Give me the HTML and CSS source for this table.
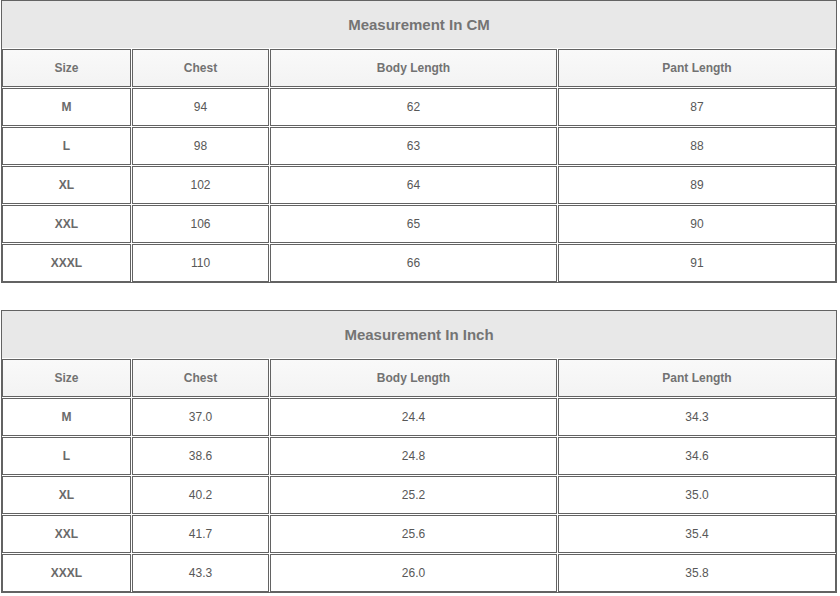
FILE: index.html
```html
<!DOCTYPE html>
<html>
<head>
<meta charset="utf-8">
<link rel="stylesheet" href="styles.css">
</head>
<body>
<div class="sheet">
  <div class="title">Measurement In CM</div>
  <div class="grid">
    <div class="cell head">Size</div><div class="cell head">Chest</div><div class="cell head">Body Length</div><div class="cell head">Pant Length</div>
    <div class="cell size">M</div><div class="cell">94</div><div class="cell">62</div><div class="cell">87</div>
    <div class="cell size">L</div><div class="cell">98</div><div class="cell">63</div><div class="cell">88</div>
    <div class="cell size">XL</div><div class="cell">102</div><div class="cell">64</div><div class="cell">89</div>
    <div class="cell size">XXL</div><div class="cell">106</div><div class="cell">65</div><div class="cell">90</div>
    <div class="cell size">XXXL</div><div class="cell">110</div><div class="cell">66</div><div class="cell">91</div>
  </div>
</div>
<div class="sheet second">
  <div class="title">Measurement In Inch</div>
  <div class="grid">
    <div class="cell head">Size</div><div class="cell head">Chest</div><div class="cell head">Body Length</div><div class="cell head">Pant Length</div>
    <div class="cell size">M</div><div class="cell">37.0</div><div class="cell">24.4</div><div class="cell">34.3</div>
    <div class="cell size">L</div><div class="cell">38.6</div><div class="cell">24.8</div><div class="cell">34.6</div>
    <div class="cell size">XL</div><div class="cell">40.2</div><div class="cell">25.2</div><div class="cell">35.0</div>
    <div class="cell size">XXL</div><div class="cell">41.7</div><div class="cell">25.6</div><div class="cell">35.4</div>
    <div class="cell size">XXXL</div><div class="cell">43.3</div><div class="cell">26.0</div><div class="cell">35.8</div>
  </div>
</div>
</body>
</html>
```

FILE: styles.css
```css
html, body {
  margin: 0;
  padding: 0;
  background: #ffffff;
}
body {
  font-family: "Liberation Sans", Arial, sans-serif;
  padding-left: 1px;
}
.sheet {
  width: 834px;
  border: 1px solid #636363;
  background: #ffffff;
}
.sheet.second {
  margin-top: 27px;
}
.title {
  height: 47px;
  margin-bottom: 1px;
  background: #e8e8e8;
  color: #747474;
  font-weight: bold;
  font-size: 15px;
  line-height: 1;
  padding-bottom: 1px;
  box-sizing: border-box;
  display: flex;
  align-items: center;
  justify-content: center;
}
.grid {
  display: grid;
  grid-template-columns: 129px 137px 287px 278px;
  grid-auto-rows: 38px;
  gap: 1px;
}
.cell {
  border: 1px solid #636363;
  display: flex;
  align-items: center;
  justify-content: center;
  font-size: 12px;
  color: #585858;
  background: #ffffff;
}
.cell.head {
  background: linear-gradient(#f9f9f9, #f3f3f3);
  color: #727272;
  font-weight: bold;
}
.cell.size {
  font-weight: bold;
  color: #6a6a6a;
}
```
